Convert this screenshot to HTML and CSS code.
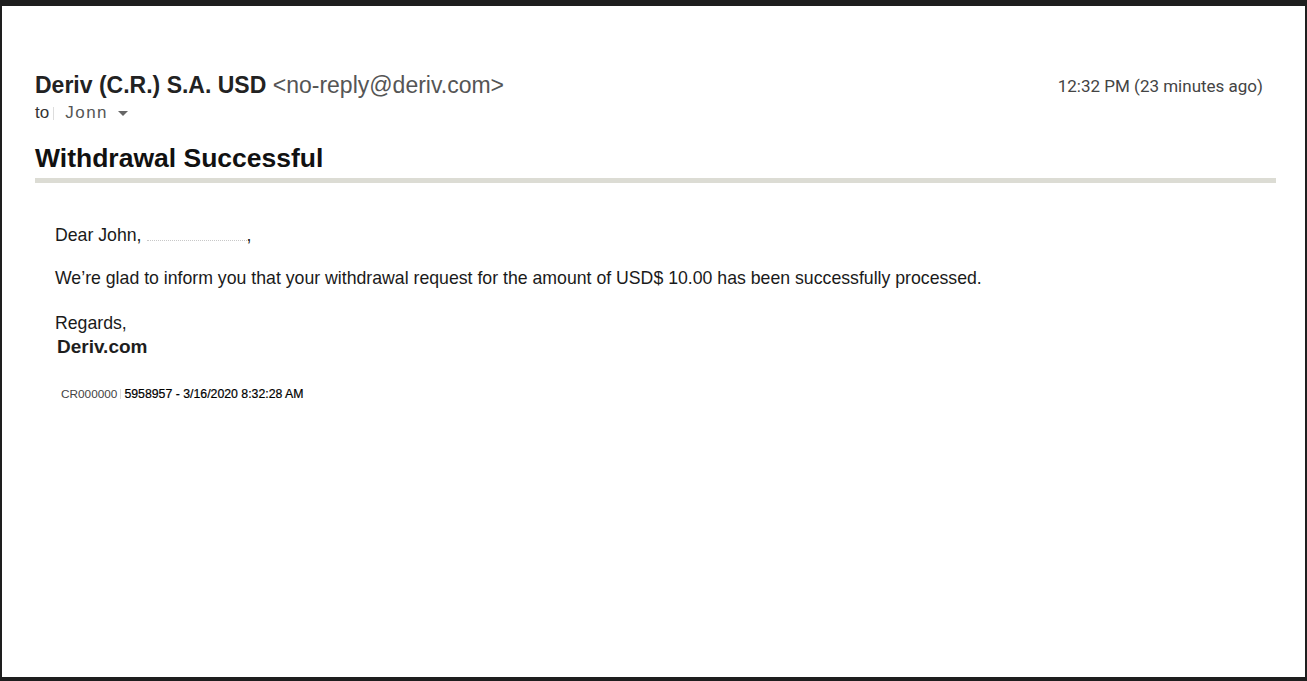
FILE: index.html
```html
<!DOCTYPE html>
<html>
<head>
<meta charset="utf-8">
<link rel="stylesheet" href="styles.css">
</head>
<body>
<div class="frame">
  <div class="mail">
    <div class="header">
      <div class="from">
        <div class="sender"><span class="name">Deriv (C.R.) S.A. USD</span> <span class="addr">&lt;no-reply@deriv.com&gt;</span></div>
        <div class="to"><span class="to-label">to</span><span class="tick"></span><span class="rcpt">Jonn</span><span class="caret"></span></div>
      </div>
      <div class="time">12:32 PM (23 minutes ago)</div>
    </div>
    <h1 class="subject">Withdrawal Successful</h1>
    <div class="rule"></div>
    <div class="body">
      <p class="greet">Dear John,<span class="redact"></span>,</p>
      <p>We’re glad to inform you that your withdrawal request for the amount of USD$ 10.00 has been successfully processed.</p>
      <p class="sign">Regards,<br><b class="brand">Deriv.com</b></p>
      <p class="ref"><span class="acct">CR000000</span><span class="tick2"></span><span class="refno">5958957 - 3/16/2020 8:32:28 AM</span></p>
    </div>
  </div>
</div>
</body>
</html>
```
FILE: styles.css
```css
html, body {
  margin: 0;
  padding: 0;
  height: 100%;
  background: #1e1e1e;
}
.frame {
  box-sizing: border-box;
  height: 681px;
  padding: 6px 2px 4px 2px;
}
.mail {
  background: #ffffff;
  height: 100%;
  box-sizing: border-box;
  padding: 67px 29px 0 33px;
  font-family: "Liberation Sans", Arial, sans-serif;
  color: #222;
}
.header {
  display: flex;
  justify-content: space-between;
  align-items: flex-start;
}
.sender {
  font-size: 23px;
  line-height: 24px;
}
.name {
  font-weight: bold;
  color: #222;
}
.addr {
  color: #555;
}
.to {
  font-size: 17px;
  line-height: 20px;
  margin-top: 6px;
  color: #555;
  display: flex;
  align-items: center;
}
.to-label {
  color: #333;
}
.tick {
  display: inline-block;
  width: 1px;
  height: 13px;
  background: #ddd;
  margin: 0 11px 0 4px;
}
.rcpt {
  letter-spacing: 1.5px;
}
.caret {
  display: inline-block;
  width: 0;
  height: 0;
  border-left: 5px solid transparent;
  border-right: 5px solid transparent;
  border-top: 5px solid #666;
  margin-left: 10px;
}
.time {
  font-family: Roboto, "Liberation Sans", sans-serif;
  font-size: 17px;
  line-height: 20px;
  color: #444;
  margin: 3px 13px 0 0;
}
.subject {
  font-size: 26.5px;
  line-height: 30px;
  font-weight: bold;
  color: #111;
  margin: 20px 0 0 0;
}
.rule {
  height: 5px;
  background: #dcdcd4;
  margin: 5px 0 0 0;
}
.body {
  padding: 41px 0 0 20px;
  font-size: 17.7px;
  line-height: 22px;
  color: #1a1a1a;
}
.body p {
  margin: 0 0 22px 0;
}
.body p.greet {
  margin-bottom: 21px;
}
.greet {
  display: flex;
  align-items: baseline;
}
.redact {
  display: inline-block;
  width: 100px;
  height: 5px;
  border-bottom: 1px dotted #c8c8c8;
  margin-left: 5px;
}
.sign {
  line-height: 24px;
}
.brand {
  display: inline-block;
  font-size: 19px;
  margin-left: 2px;
  color: #1e1e1e;
}
.body p.ref {
  font-size: 12.3px;
  line-height: 14px;
  padding-left: 6px;
  display: flex;
  align-items: center;
  margin-top: 28px;
}
.acct {
  font-size: 11.8px;
  color: #444;
}
.tick2 {
  display: inline-block;
  width: 1px;
  height: 10px;
  background: #ddd;
  margin: 0 3px;
}
.refno {
  color: #000;
  -webkit-text-stroke: 0.2px #000;
}
```
